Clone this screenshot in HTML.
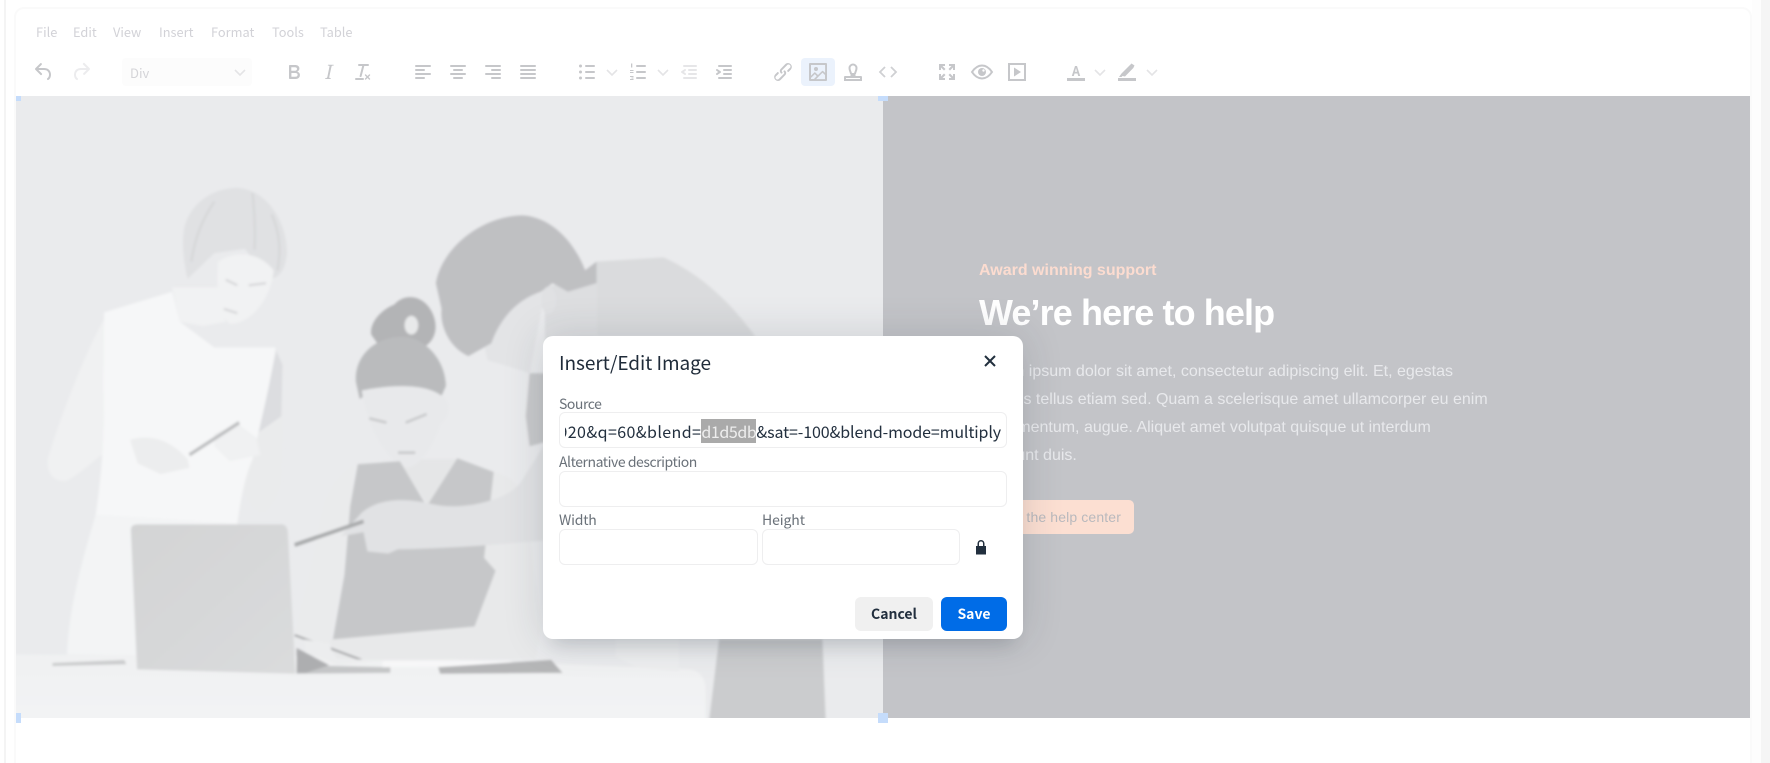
<!DOCTYPE html>
<html lang="en"><head><meta charset="utf-8"><title>Insert/Edit Image</title>
<style>
html,body{margin:0;padding:0;width:1770px;height:763px;overflow:hidden;background:#fff}
*{box-sizing:border-box}
body{position:relative;font-family:"Noto Sans CJK JP","Liberation Sans",sans-serif}
.a{position:absolute;white-space:nowrap}
.m{position:absolute;top:22px;line-height:20px;font-size:12.8px;color:#d2d2d7}
.i{position:absolute;top:60px;width:24px;height:24px}
.i path,.i rect,.i circle{fill:#c6c7ca}
.s path{fill:none!important;stroke:#e4e4e6;stroke-width:1.6}
.l{position:absolute;font-size:14px;line-height:18px;color:#6a7179}
.f{position:absolute;background:#fff;border:1px solid #eeeeef;border-radius:6px;height:36px}
.p{position:absolute;left:979px;font-family:"Liberation Sans",sans-serif;font-size:16px;line-height:28px;color:#e8e9ec;white-space:nowrap}
</style></head><body>
<div class="a" style="left:4px;top:0;width:2px;height:763px;background:#f4f4f4"></div>
<div class="a" style="left:1752px;top:0;width:9px;height:763px;background:#fdfdfd"></div>
<div class="a" style="left:1761px;top:0;width:9px;height:763px;background:#f5f5f5"></div>
<div class="a" style="left:14px;top:7px;width:1738px;height:770px;border:2px solid #fafafa;border-radius:10px;background:#fff"></div>

<span class="m" style="left:36px">File</span><span class="m" style="left:73px">Edit</span><span class="m" style="left:113px">View</span><span class="m" style="left:159px">Insert</span><span class="m" style="left:211px">Format</span><span class="m" style="left:272px">Tools</span><span class="m" style="left:320px">Table</span>

<svg class="i" style="left:32px" viewBox="0 0 24 24"><path d="M6.4 8H12c3.7 0 6.2 2 6.8 5.1.6 2.7-.4 5.6-2.3 6.8a1 1 0 0 1-1-1.8c1.1-.6 1.8-2.7 1.4-4.6-.5-2.1-2.1-3.5-4.9-3.5H6.4l3.3 3.3a1 1 0 1 1-1.4 1.4l-5-5a1 1 0 0 1 0-1.4l5-5a1 1 0 0 1 1.4 1.4L6.4 8Z"/></svg>
<svg class="i" style="left:69px" viewBox="0 0 24 24"><path style="fill:#ececee" d="M17.6 10H12c-2.8 0-4.4 1.4-4.9 3.5-.4 2 .3 4 1.4 4.6a1 1 0 1 1-1 1.8c-2-1.2-2.9-4.1-2.3-6.8.6-3 3-5.1 6.8-5.1h5.6l-3.3-3.3a1 1 0 1 1 1.4-1.4l5 5a1 1 0 0 1 0 1.4l-5 5a1 1 0 0 1-1.4-1.4l3.3-3.3Z"/></svg>

<div class="a" style="left:122px;top:58px;width:130px;height:28px;background:#fcfcfc;border-radius:4px"></div>
<span class="a" style="left:130px;top:63px;font-size:13px;line-height:20px;color:#d4d4d8">Div</span>
<svg class="i s" style="left:228px" viewBox="0 0 24 24"><path d="M7 10l5 5 5-5"/></svg>

<svg class="i" style="left:282px" viewBox="0 0 24 24"><path d="M7.8 19c-.3 0-.5 0-.6-.2l-.2-.5V5.7c0-.2 0-.4.2-.5l.6-.2h5c1.500 0 2.700.3 3.500 1 .7.6 1.100 1.400 1.100 2.500a3 3 0 0 1-.6 1.900c-.4.6-1 1-1.600 1.200.4.1.9.3 1.300.6s.8.7 1 1.200c.3.4.4 1 .4 1.600 0 1.300-.4 2.300-1.300 3-.8.7-2 1-3.800 1H7.800Zm5-8.300c.6 0 1.200-.1 1.600-.5.4-.3.6-.7.6-1.300 0-1.100-.8-1.700-2.300-1.700H9.300v3.500h3.400Zm.5 6c.7 0 1.300-.1 1.700-.4.4-.4.6-.9.6-1.500s-.2-1-.7-1.400c-.4-.3-1-.4-2-.4H9.400v3.800h4Z"/></svg>
<svg class="i" style="left:317px" viewBox="0 0 24 24"><path d="m16.7 4.700-.1.900h-.3c-.6 0-1 0-1.400.3-.3.3-.4.6-.5 1.100l-2.100 9.800v.6c0 .5.4.8 1.400.8h.2l-.2.8H8l.2-.8h.2c1.100 0 1.800-.5 2-1.500l2-9.800.1-.5c0-.6-.4-.8-1.400-.8h-.3l.2-.9h5.800Z"/></svg>
<svg class="i" style="left:351px" viewBox="0 0 24 24"><path d="M13.200 6a1 1 0 0 1 0 .2l-2.600 10a1 1 0 0 1-1 .8h-.2a.8.800 0 0 1-.8-1l2.600-10H8a1 1 0 1 1 0-2h9a1 1 0 0 1 0 2h-3.800ZM5 18h7a1 1 0 0 1 0 2H5a1 1 0 0 1 0-2Zm13 1.500L16.500 18 15 19.500a.7.700 0 0 1-1-1l1.500-1.500-1.500-1.500a.7.700 0 0 1 1-1l1.500 1.500 1.500-1.500a.7.700 0 0 1 1 1L17.500 17l1.500 1.500a.7.700 0 0 1-1 1Z"/></svg>

<svg class="i" style="left:411px" viewBox="0 0 24 24"><path d="M5 5h14c.6 0 1 .4 1 1s-.4 1-1 1H5a1 1 0 1 1 0-2Zm0 4h8c.6 0 1 .4 1 1s-.4 1-1 1H5a1 1 0 1 1 0-2Zm0 8h8c.6 0 1 .4 1 1s-.4 1-1 1H5a1 1 0 0 1 0-2Zm0-4h14c.6 0 1 .4 1 1s-.4 1-1 1H5a1 1 0 0 1 0-2Z"/></svg>
<svg class="i" style="left:446px" viewBox="0 0 24 24"><path d="M5 5h14c.6 0 1 .4 1 1s-.4 1-1 1H5a1 1 0 1 1 0-2Zm3 4h8c.6 0 1 .4 1 1s-.4 1-1 1H8a1 1 0 1 1 0-2Zm0 8h8c.6 0 1 .4 1 1s-.4 1-1 1H8a1 1 0 0 1 0-2Zm-3-4h14c.6 0 1 .4 1 1s-.4 1-1 1H5a1 1 0 0 1 0-2Z"/></svg>
<svg class="i" style="left:481px" viewBox="0 0 24 24"><path d="M5 5h14c.6 0 1 .4 1 1s-.4 1-1 1H5a1 1 0 1 1 0-2Zm6 4h8c.6 0 1 .4 1 1s-.4 1-1 1h-8a1 1 0 0 1 0-2Zm0 8h8c.6 0 1 .4 1 1s-.4 1-1 1h-8a1 1 0 0 1 0-2Zm-6-4h14c.6 0 1 .4 1 1s-.4 1-1 1H5a1 1 0 0 1 0-2Z"/></svg>
<svg class="i" style="left:516px" viewBox="0 0 24 24"><path d="M5 5h14c.6 0 1 .4 1 1s-.4 1-1 1H5a1 1 0 1 1 0-2Zm0 4h14c.6 0 1 .4 1 1s-.4 1-1 1H5a1 1 0 1 1 0-2Zm0 4h14c.6 0 1 .4 1 1s-.4 1-1 1H5a1 1 0 0 1 0-2Zm0 4h14c.6 0 1 .4 1 1s-.4 1-1 1H5a1 1 0 0 1 0-2Z"/></svg>

<svg class="i" style="left:575px" viewBox="0 0 24 24"><rect x="10" y="5" width="10" height="2" rx="1"/><rect x="10" y="11" width="10" height="2" rx="1"/><rect x="10" y="17" width="10" height="2" rx="1"/><circle cx="5.500" cy="6" r="1.500"/><circle cx="5.500" cy="12" r="1.500"/><circle cx="5.500" cy="18" r="1.500"/></svg>
<svg class="i s" style="left:600px" viewBox="0 0 24 24"><path d="M7 10l5 5 5-5"/></svg>
<svg class="i" style="left:626px" viewBox="0 0 24 24"><rect x="10" y="5" width="10" height="2" rx="1"/><rect x="10" y="11" width="10" height="2" rx="1"/><rect x="10" y="17" width="10" height="2" rx="1"/><rect x="5" y="3.500" width="1.300" height="4"/><rect x="4" y="10" width="3.500" height="1"/><rect x="4" y="12" width="3.500" height="1"/><rect x="4" y="16" width="3.500" height="1"/><rect x="4" y="19" width="3.500" height="1"/><rect x="5.500" y="17.500" width="2" height="1"/></svg>
<svg class="i s" style="left:651px" viewBox="0 0 24 24"><path d="M7 10l5 5 5-5"/></svg>
<svg class="i" style="left:677px" viewBox="0 0 24 24"><path style="fill:#e6e6e8" d="M7 5h12c.6 0 1 .4 1 1s-.4 1-1 1H7a1 1 0 1 1 0-2Zm5 4h7c.6 0 1 .4 1 1s-.4 1-1 1h-7a1 1 0 0 1 0-2Zm0 4h7c.6 0 1 .4 1 1s-.4 1-1 1h-7a1 1 0 0 1 0-2Zm-5 4h12a1 1 0 0 1 0 2H7a1 1 0 0 1 0-2Zm1.600-3.800a1 1 0 0 1-1.200 1.600l-3-2a1 1 0 0 1 0-1.600l3-2a1 1 0 0 1 1.200 1.600L6.800 12l1.800 1.200Z"/></svg>
<svg class="i" style="left:712px" viewBox="0 0 24 24"><path d="M7 5h12c.6 0 1 .4 1 1s-.4 1-1 1H7a1 1 0 1 1 0-2Zm5 4h7c.6 0 1 .4 1 1s-.4 1-1 1h-7a1 1 0 0 1 0-2Zm0 4h7c.6 0 1 .4 1 1s-.4 1-1 1h-7a1 1 0 0 1 0-2Zm-5 4h12a1 1 0 0 1 0 2H7a1 1 0 0 1 0-2Zm-2.600-3.800L6.200 12l-1.800-1.200a1 1 0 0 1 1.200-1.600l3 2a1 1 0 0 1 0 1.600l-3 2a1 1 0 1 1-1.200-1.600Z"/></svg>

<svg class="i" style="left:771px" viewBox="0 0 24 24"><path d="M6.200 12.300a1 1 0 0 1 1.400 1.400l-2 2a2 2 0 1 0 2.600 2.800l4.800-4.800a1 1 0 0 0 0-1.400 1 1 0 1 1 1.400-1.300 2.900 2.900 0 0 1 0 4L9.600 20a3.900 3.900 0 0 1-5.500-5.500l2-2Zm11.600-.6a1 1 0 0 1-1.400-1.400l2-2a2 2 0 1 0-2.600-2.800L11 10.300a1 1 0 0 0 0 1.400A1 1 0 1 1 9.600 13a2.900 2.900 0 0 1 0-4L14.400 4a3.900 3.900 0 0 1 5.500 5.500l-2 2Z"/></svg>
<div class="a" style="left:801px;top:58px;width:34px;height:28px;background:#ebf2fc;border-radius:4px"></div>
<svg class="i" style="left:806px" viewBox="0 0 24 24"><path fill-rule="evenodd" d="m5 15.700 3.300-3.200c.3-.3.7-.3 1 0L12 15l4.100-4c.3-.4.8-.4 1 0l2 1.900V5H5v10.700ZM5 18V19h3l2.800-2.900-2-2L5 17.900Zm14-3-2.500-2.400-6.400 6.500H19v-4ZM4 3h16c.6 0 1 .4 1 1v16c0 .6-.4 1-1 1H4a1 1 0 0 1-1-1V4c0-.6.4-1 1-1Zm6 8a2 2 0 1 0 0-4 2 2 0 0 0 0 4Z"/></svg>
<svg class="i" style="left:841px" viewBox="0 0 24 24"><path style="fill:none;stroke:#c6c7ca;stroke-width:2" d="M10 14c0-2-1.500-3-1.500-6a3.500 3.500 0 0 1 7 0c0 3-1.500 4-1.500 6"/><rect x="9.500" y="13" width="5" height="4"/><path d="M4 16h16a1 1 0 0 1 1 1v4H3v-4a1 1 0 0 1 1-1Zm1 2v1h14v-1Z" fill-rule="evenodd"/></svg>
<svg class="i" style="left:876px" viewBox="0 0 24 24"><path style="fill:none;stroke:#cfd0d3;stroke-width:1.800" d="M9 7l-5 5 5 5M15 7l5 5-5 5"/></svg>

<svg class="i" style="left:935px" viewBox="0 0 24 24"><path d="M4 4h6v2H7.500l3 3-1.500 1.500-3-3V10H4ZM20 4v6h-2V7.500l-3 3L13.500 9l3-3H14V4ZM4 20v-6h2v2.500l3-3 1.500 1.500-3 3H10v2ZM20 20h-6v-2h2.500l-3-3 1.500-1.500 3 3V14h2Z"/></svg>
<svg class="i" style="left:970px" viewBox="0 0 24 24"><path style="fill:none;stroke:#c6c7ca;stroke-width:2" d="M2 12c3-4.500 6.200-6.500 10-6.500S19 7.500 22 12c-3 4.500-6.200 6.500-10 6.500S5 16.500 2 12Z"/><circle cx="12" cy="12" r="4"/><circle cx="13.500" cy="10.500" r="1.200" style="fill:#fff"/></svg>
<svg class="i" style="left:1005px" viewBox="0 0 24 24"><path fill-rule="evenodd" d="M3 3h18v18H3Zm2 2v14h14V5Zm4 2.500 7 4.500-7 4.500Z"/></svg>

<svg class="i" style="left:1064px" viewBox="0 0 24 24"><rect x="3" y="18" width="18" height="3"/><path d="M7.800 16 11 6h2l3.200 10h-2l-.7-2.500h-3l-.7 2.500Zm3.200-4.300h2L12 8Z" fill-rule="evenodd"/></svg>
<svg class="i s" style="left:1088px" viewBox="0 0 24 24"><path d="M7 10l5 5 5-5"/></svg>
<svg class="i" style="left:1115px" viewBox="0 0 24 24"><rect x="3" y="18" width="18" height="3"/><path d="M4 17l2.500-3.500L15 5l1.500-1.500 3 2-1.200 2.500L10 16.500 7.500 16l-1 1Z"/></svg>
<svg class="i s" style="left:1140px" viewBox="0 0 24 24"><path d="M7 10l5 5 5-5"/></svg>

<svg class="a" style="left:0;top:0" width="1770" height="763" viewBox="0 0 1770 763">
<defs>
<clipPath id="c"><rect x="16" y="96" width="867" height="622"/></clipPath>
<filter id="b" x="-5%" y="-5%" width="110%" height="110%"><feGaussianBlur stdDeviation="1.400"/></filter>
<linearGradient id="tb" x1="0" y1="0" x2="0" y2="1"><stop offset="0" stop-color="#f0f1f2"/><stop offset="1" stop-color="#f3f4f5"/></linearGradient>
<linearGradient id="lp" x1="0" y1="0" x2="1" y2="1"><stop offset="0" stop-color="#d3d4d5"/><stop offset="1" stop-color="#dadbdc"/></linearGradient>
</defs>
<rect x="16" y="96" width="867" height="622" fill="#eaebed"/>
<rect x="883" y="96" width="867" height="622" fill="#c3c4c8"/>
<g clip-path="url(#c)"><g filter="url(#b)">
<g transform="translate(0,90) scale(.3827,.4292)">
<path fill="url(#tb)" d="M0,1315L1000,1320L1800,1350Q1844,1355 1844,1400L1844,1520L0,1520Z"/>
<path fill="#f3f4f5" d="M250,990L620,1010L640,1320L175,1315C180,1200 220,1080 250,990Z"/>
<path fill="#f0f1f2" d="M285,515C230,590 150,780 125,860C120,900 150,915 175,910C220,890 270,840 330,810L440,890L500,880L470,830L380,805L290,815L270,780Z"/>
<path fill="#eaebec" d="M722,605C740,640 740,800 735,900C730,950 700,985 680,985C650,970 630,930 625,900L670,800Z"/>
<path fill="#dcdde0" d="M722,608L738,640L735,760L672,800Z"/>
<path fill="#f6f7f8" d="M272,518L450,470L470,540L560,600L720,600C715,650 680,780 660,860C640,900 630,950 620,1010L250,990C265,900 275,800 270,690Z"/>
<path fill="#ecedee" d="M340,815C400,800 450,820 490,860L495,880L420,895L360,870Z"/>
<path fill="#f0f1f2" d="M560,800L625,780L670,810L680,850L600,865L560,830Z"/>
<path stroke="#bcbdbf" stroke-width="8" d="M495,850L625,775"/>
<path fill="#f1f2f3" d="M450,460L470,540L530,550L590,540L570,460Z"/>
<path fill="#e0e1e3" d="M480,330C490,270 550,228 620,228C700,232 750,310 750,380C745,420 730,440 700,440L640,370L560,380L490,440C480,400 475,360 480,330Z"/>
<path stroke="#d4d5d7" stroke-width="5" fill="none" d="M660,240C665,290 668,330 665,372M560,260C530,300 510,340 500,400M710,290C730,330 735,370 725,420"/>
<path fill="#f1f2f3" d="M570,400C620,370 680,380 715,420C710,480 660,545 600,545C570,520 565,460 570,400Z"/>
<path stroke="#d5d6d8" stroke-width="5" d="M590,442L620,455M650,455L695,450M585,510L620,520"/>
<path fill="url(#lp)" d="M342,1025Q342,1012 360,1012L735,1012Q750,1012 752,1030L772,1360L358,1350Z"/>
<path fill="#cbcccd" d="M137,1335L325,1328L330,1338L137,1342Z"/>
<path fill="#c5c6c7" d="M775,1340L1020,1345L1020,1358L775,1360Z"/>
<path fill="#f7f7f8" d="M1000,1330L1335,1330L1335,1342L1000,1345Z"/>
<path fill="#b5b6b7" d="M1145,1345L1440,1328L1470,1358L1150,1360Z"/>
<path fill="#b3b4b6" d="M970,570C965,540 1000,510 1030,500C1060,470 1110,480 1130,520C1150,560 1130,590 1105,600L1050,580L990,595Z"/>
<ellipse cx="1075" cy="548" rx="18" ry="22" fill="#e8e9ea"/>
<path fill="#babbbd" d="M930,680C925,620 980,575 1050,575C1110,575 1165,630 1165,690L1150,720C1100,690 1000,680 940,720Z"/>
<path fill="#e5e6e7" d="M1040,860L1200,860L1120,970Z"/>
<path fill="#e8e9eb" d="M945,700C1000,690 1100,680 1150,710C1180,720 1180,760 1150,780C1130,840 1090,880 1060,880C1010,860 965,800 945,700Z"/>
<path stroke="#c8c9cb" stroke-width="6" fill="none" d="M965,765L1010,775M1060,775L1115,755M1040,845L1085,845"/>
<path fill="#e8e9ea" d="M1195,860L1290,890C1340,900 1360,920 1375,980L1415,1250L1400,1325L880,1330L860,1280L1240,1250L1295,1120L1270,1100Z"/>
<path fill="#eaebec" d="M925,875C870,900 840,960 830,1040C810,1130 780,1220 770,1280L860,1290L895,1130L915,970Z"/>
<path fill="#c6c7c9" d="M935,872L1045,865L1115,970L1195,858L1290,890L1265,1090L1295,1120L1240,1250L870,1280L900,1130L915,970Z"/>
<path fill="#adaeb0" d="M775,1300L860,1340L800,1358L775,1358Z"/>
<path stroke="#a4a5a7" stroke-width="5" d="M770,1270L945,1328"/>
<path fill="#ecedee" d="M795,1280L860,1290L875,1325L1000,1328L880,1340L800,1310Z"/>
<path fill="#e1e2e4" d="M1420,830L1360,915C1320,960 1200,980 1130,965C1060,950 990,950 945,985L890,1040L950,1030L960,1075L1015,1080L1040,1070C1120,1070 1300,1060 1420,1050Z"/>
<path stroke="#a9aaac" stroke-width="9" d="M770,1060L950,1005"/>
</g>
<g transform="translate(300,90) scale(.3827,.4292)">
<path fill="#cbccce" d="M1095,1280L1365,1280L1375,1500L1065,1500Z"/>
<path fill="#dadbdd" d="M775,400L950,390C1050,430 1130,500 1190,575L775,575Z"/>
<path fill="#c8c9cb" d="M600,660L640,660L640,820L600,830L590,760Z"/>
<path fill="#dddee0" d="M640,460L775,430L775,575L640,600Z"/>
<path fill="#e3e4e6" d="M480,590C500,560 560,480 640,470L600,660L530,640L490,630Z"/>
<path fill="#bfc0c2" d="M355,450C370,370 470,295 580,292C660,295 720,360 745,420L775,400L775,450L700,470L660,450L630,470C560,490 520,540 500,590L440,620C390,600 365,550 370,510Z"/>
<ellipse cx="650" cy="490" rx="20" ry="32" fill="#e0e1e3"/>
<path fill="#edeeef" d="M825,1280L990,1280L990,1355L880,1345L825,1320Z"/>
</g>
</g></g>
<g fill="#c5dcfb"><rect x="16" y="96" width="5" height="5"/><rect x="878" y="96" width="10" height="5"/><rect x="16" y="713" width="5" height="10"/><rect x="878" y="713" width="10" height="10"/></g>
</svg>

<span class="a" style="left:979px;top:260px;font:bold 16px/22px 'Liberation Sans',sans-serif;color:#fcdcd0">Award winning support</span>
<span class="a" style="left:979px;top:290px;font:bold 36px/46px 'Liberation Sans',sans-serif;letter-spacing:-.9px;color:#fff">We’re here to help</span>
<div class="p" style="top:358px">Lorem ipsum dolor sit amet, consectetur adipiscing elit. Et, egestas</div>
<div class="p" style="top:386px">tempus tellus etiam sed. Quam a scelerisque amet ullamcorper eu enim</div>
<div class="p" style="top:414px">condimentum, augue. Aliquet amet volutpat quisque ut interdum</div>
<div class="p" style="top:442px">tincidunt duis.</div>
<div class="a" style="left:979px;top:500px;width:155px;height:34px;background:#fcdfd2;border-radius:5px;font:14px/34px 'Liberation Sans',sans-serif;letter-spacing:.13px;color:#b9b9bd;padding-right:13px;text-align:right">Visit the help center</div>

<div class="a" style="left:543px;top:336px;width:480px;height:303px;background:#fff;border-radius:10px;box-shadow:0 16px 16px -10px rgba(34,47,62,.15),0 0 40px 1px rgba(34,47,62,.15)"></div>
<span class="a" style="left:559px;top:349px;font-size:19px;line-height:28px;letter-spacing:-.06px;color:#1f2b39">Insert/Edit Image</span>
<svg class="a" style="left:982px;top:353px" width="16" height="16" viewBox="0 0 16 16"><path d="M3 3l10 10M13 3L3 13" stroke="#222f3e" stroke-width="2" fill="none"/></svg>
<span class="l" style="left:559px;top:395px;letter-spacing:-.45px">Source</span>
<div class="f" style="left:559px;top:412px;width:448px"></div>
<div class="a" style="left:565px;top:418px;width:436px;height:26px;overflow:hidden"><span class="a" style="right:0;top:0;font-size:16px;line-height:26px;color:#222f3e"><span style="letter-spacing:.4px">920&amp;q=60&amp;blend=</span><span style="background:#aaa;color:#eee;letter-spacing:-.4px">d1d5db</span><span style="letter-spacing:-.12px">&amp;sat=-100&amp;blend-mode=multiply</span></span></div>
<span class="l" style="left:559px;top:453px;letter-spacing:-.45px">Alternative description</span>
<div class="f" style="left:559px;top:471px;width:448px"></div>
<span class="l" style="left:559px;top:511px;letter-spacing:-.2px">Width</span>
<span class="l" style="left:762px;top:511px;letter-spacing:-.1px">Height</span>
<div class="f" style="left:559px;top:529px;width:199px"></div>
<div class="f" style="left:762px;top:529px;width:198px"></div>
<svg class="a" style="left:975px;top:539px" width="12" height="16" viewBox="0 0 12 16"><path fill="#222f3e" d="M1 15.500V7h1.500V4.500a3.500 3.500 0 0 1 7 0V7H11v8.500ZM4 7h4V4.500a2 2 0 0 0-4 0Z" fill-rule="evenodd"/></svg>
<div class="a" style="left:855px;top:597px;width:78px;height:34px;background:#f0f0f0;border-radius:6px;text-align:center;font-size:14px;font-weight:700;line-height:35px;color:#222f3e">Cancel</div>
<div class="a" style="left:941px;top:597px;width:66px;height:34px;background:#006ce7;border-radius:6px;text-align:center;font-size:14px;font-weight:700;line-height:35px;color:#fff">Save</div>
</body></html>
